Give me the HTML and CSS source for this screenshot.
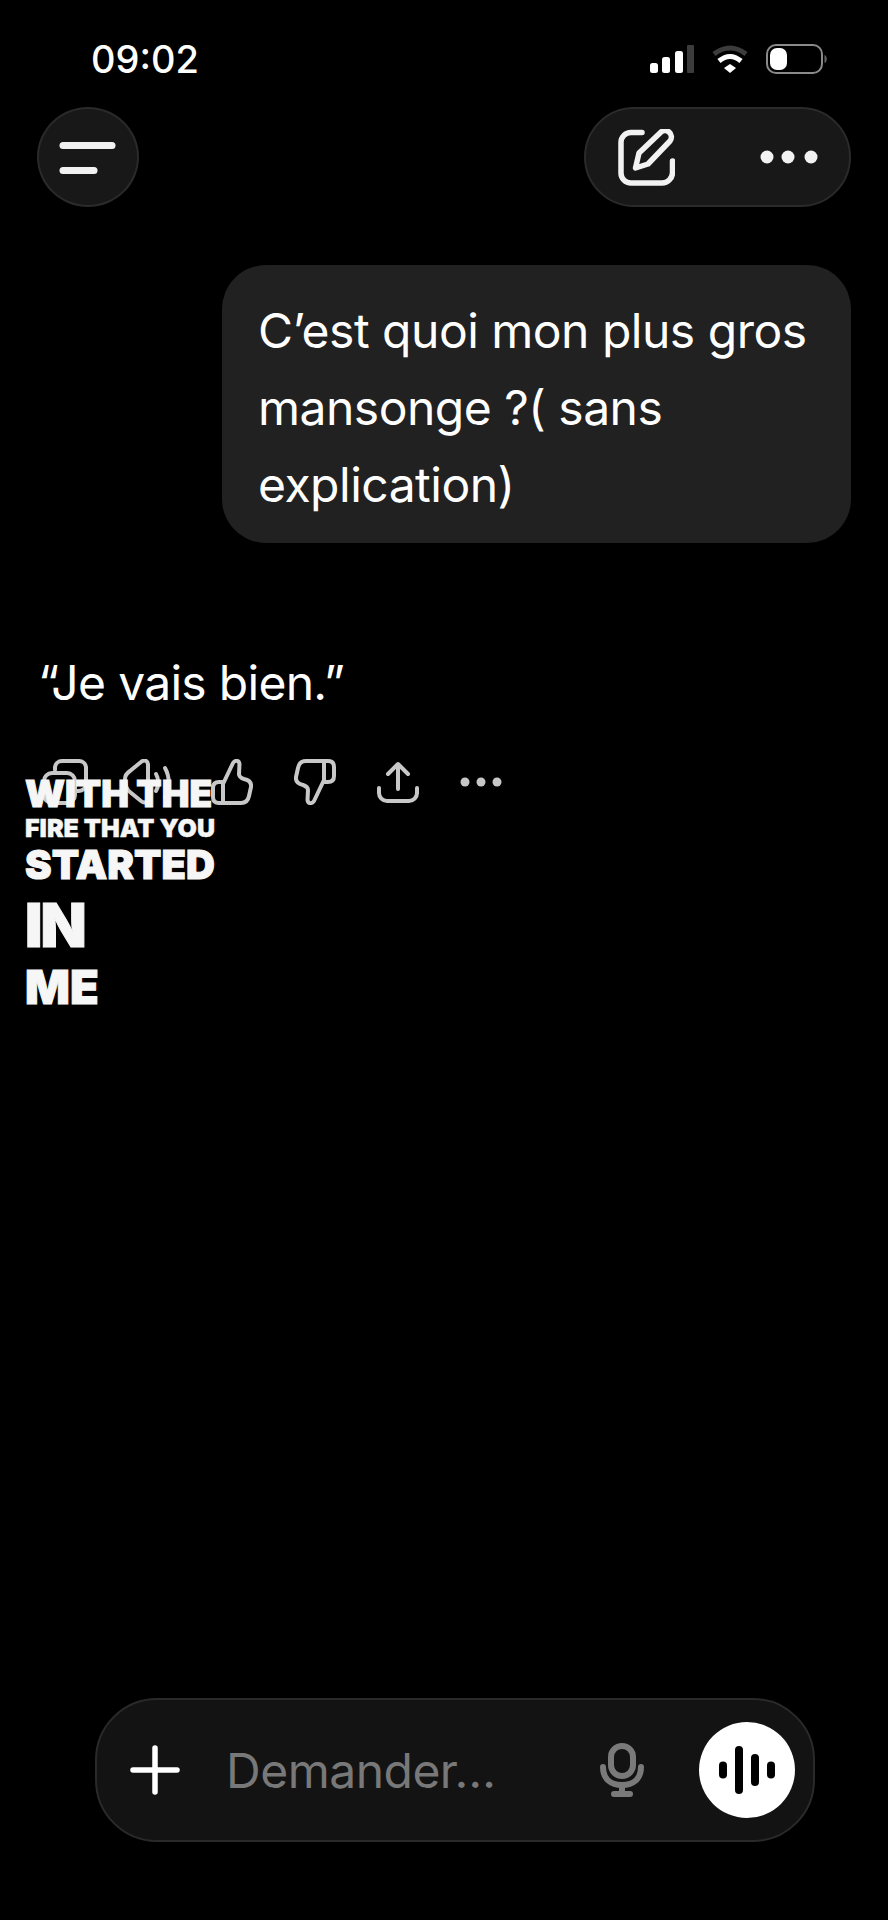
FILE: index.html
```html
<!DOCTYPE html>
<html lang="fr">
<head>
	<meta charset="UTF-8">
	<title>Conversation</title>
	<link rel="stylesheet" href="styles.css">
</head>
<body>
	<div class="screen">
		<div class="status-bar">
			<span class="time">09:02</span>
			<div class="status-icons">
				<svg class="sig" width="44" height="30" viewBox="0 0 44 30">
					<rect x="0" y="19" width="8" height="10" rx="2.500" fill="#fff"/>
					<rect x="12" y="13" width="8" height="16" rx="2.500" fill="#fff"/>
					<rect x="25" y="7" width="8" height="22" rx="2.500" fill="#fff"/>
					<rect x="37" y="1" width="7" height="28" rx="1" fill="#3c3c3c"/>
				</svg>
				<svg class="wifi" width="36" height="30" viewBox="0 0 36 30" fill="none">
					<path d="M2 10 Q18 -2 34 10" stroke="#3c3c3c" stroke-width="5"/>
					<path d="M7 17 Q18 8 29 17" stroke="#fff" stroke-width="5"/>
					<path d="M12 24 L18 20 L24 24 L18 29 Z" fill="#fff"/>
				</svg>
				<svg class="batt" width="62" height="30" viewBox="0 0 62 30" fill="none">
					<rect x="1" y="1" width="55" height="28" rx="9" stroke="#8a8a8a" stroke-width="2"/>
					<rect x="4" y="4" width="17" height="22" rx="7" fill="#fff"/>
					<path d="M58.500 11 C61.500 12 61.500 18 58.500 19 Z" fill="#666"/>
				</svg>
			</div>
		</div>

		<div class="top-bar">
			<button class="round-btn">
				<svg width="60" height="36" viewBox="0 0 60 36" fill="none" stroke="#f2f2f2" stroke-width="7" stroke-linecap="round">
					<path d="M5 6.500 H54"/>
					<path d="M5 31.500 H36"/>
				</svg>
			</button>
			<div class="pill-btn">
				<svg width="57" height="57" viewBox="0 0 57 57" fill="none" stroke="#f2f2f2" stroke-width="5.500" stroke-linecap="round" stroke-linejoin="round">
					<path d="M24 3.500 H13 A10 10 0 0 0 3 13.500 V44 A10 10 0 0 0 13 54 H44 A10.500 10.500 0 0 0 54.500 43.500 V32"/>
					<path d="M17.500 39 L21 24 L42 4 A6 6 0 0 1 52 12 L30 35 Z"/>
				</svg>
				<svg width="58" height="14" viewBox="0 0 58 14" fill="#f2f2f2">
					<circle cx="7" cy="7" r="6.500"/>
					<circle cx="28" cy="7" r="6.500"/>
					<circle cx="51" cy="7" r="6.500"/>
				</svg>
			</div>
		</div>

		<div class="thread">
			<div class="user-msg">C’est quoi mon plus gros mansonge ?( sans explication)</div>
			<p class="reply">“Je vais bien.”</p>
			<div class="reply-actions">
				<svg class="act-copy" width="46" height="46" viewBox="0 0 46 46" fill="none">
					<path d="M13 11 V8 A7 7 0 0 1 20 2 H37 A7 7 0 0 1 44 8 V25 A7 7 0 0 1 37 32 H33"/>
					<rect x="2" y="14" width="31" height="30" rx="8"/>
				</svg>
				<svg class="act-voice" width="50" height="46" viewBox="0 0 50 46" fill="none">
					<path d="M2 20 C2 16 4 14 7 12 L18 3 C22 0 25 2 25 6 V38 C25 43 22 45 18 42 L7 33 C3 30 2 26 2 20 Z"/>
					<path d="M33 15 C36 20 36 27 33 32"/>
					<path d="M42 9 C47 18 47 29 42 38"/>
				</svg>
				<svg class="act-up" width="42" height="46" viewBox="0 0 42 46" fill="none">
					<g transform="rotate(180 21 23)">
						<path d="M30 2 V21 L20 42 C18 45 14 45 13.500 41 L14 31 C14 28 12 27 9 26 C4 25 1.500 22 2 18 L4 9 C5 4 8 2 12 2 H34 C38 2 40 4 40 8 V17 C40 21 38 23 34 23 H30"/>
					</g>
				</svg>
				<svg class="act-down" width="42" height="46" viewBox="0 0 42 46" fill="none">
					<path d="M30 2 V21 L20 42 C18 45 14 45 13.500 41 L14 31 C14 28 12 27 9 26 C4 25 1.500 22 2 18 L4 9 C5 4 8 2 12 2 H34 C38 2 40 4 40 8 V17 C40 21 38 23 34 23 H30"/>
				</svg>
				<svg class="act-share" width="42" height="42" viewBox="0 0 42 42" fill="none">
					<path d="M21 28 V4"/>
					<path d="M11 13 L21 3 L31 13"/>
					<path d="M2 27 V32 A8 8 0 0 0 10 40 H32 A8 8 0 0 0 40 32 V27"/>
				</svg>
				<svg class="act-more" width="42" height="10" viewBox="0 0 42 10" fill="#c8c8c8">
					<circle cx="5" cy="5" r="4.500"/>
					<circle cx="21" cy="5" r="4.500"/>
					<circle cx="37" cy="5" r="4.500"/>
				</svg>
			</div>
		</div>

		<div class="lyrics">
			<span class="ly-a">WITH THE</span>
			<span class="ly-b">FIRE THAT YOU</span>
			<span class="ly-c">STARTED</span>
			<span class="ly-d">IN</span>
			<span class="ly-e">ME</span>
		</div>

		<div class="composer">
			<svg class="plus" width="50" height="50" viewBox="0 0 50 50" stroke="#fff" stroke-width="5.500" stroke-linecap="round">
				<path d="M25 3 V47"/>
				<path d="M3 25 H47"/>
			</svg>
			<span class="placeholder">Demander…</span>
			<svg class="mic" width="44" height="54" viewBox="0 0 44 54" fill="none" stroke="#7a7a7a" stroke-width="6" stroke-linecap="round">
				<rect x="11" y="3" width="22" height="30" rx="11"/>
				<path d="M3 24 C3 36 11 42 22 42 C33 42 41 36 41 24"/>
				<path d="M22 42 V50"/>
				<path d="M14 51 H30"/>
			</svg>
			<div class="send-btn">
				<svg width="56" height="48" viewBox="0 0 56 48" stroke="#000" stroke-width="8" stroke-linecap="round">
					<path d="M4 19.500 V28.500"/>
					<path d="M20 4 V44"/>
					<path d="M36 12 V36"/>
					<path d="M52 19.500 V28.500"/>
				</svg>
			</div>
		</div>
	</div>
</body>
</html>
```

FILE: styles.css
```css
* {
	box-sizing: border-box;
}
html, body {
	margin: 0;
	height: 100%;
	background: #000;
}
.screen {
	position: relative;
	width: 888px;
	height: 1920px;
	overflow: hidden;
	background: #000;
	color: #fff;
	font-family: Inter, "Liberation Sans", sans-serif;
	display: flex;
	flex-direction: column;
}
.status-bar {
	display: flex;
	justify-content: space-between;
	align-items: center;
	height: 30px;
	margin-top: 44px;
	padding: 0 60px 0 91px;
}
.time {
	font-size: 38px;
	font-weight: 500;
}
.status-icons {
	display: flex;
	align-items: center;
	gap: 18px;
}
.top-bar {
	display: flex;
	justify-content: space-between;
	margin-top: 33px;
	padding: 0 37px;
}
.round-btn {
	display: flex;
	align-items: center;
	justify-content: center;
	width: 102px;
	height: 100px;
	padding: 0;
	border-radius: 50%;
	border: 2px solid #2a2a2a;
	background: #181818;
}
.pill-btn {
	display: flex;
	align-items: center;
	justify-content: space-between;
	width: 267px;
	height: 100px;
	padding: 0 31px 0 32px;
	border-radius: 50px;
	border: 2px solid #2a2a2a;
	background: #181818;
}
.thread {
	display: flex;
	flex-direction: column;
	margin-top: 58px;
	padding: 0 37px 0 38px;
}
.user-msg {
	align-self: flex-end;
	width: 629px;
	height: 278px;
	padding: 27px 20px 0 36px;
	border-radius: 44px;
	background: #212121;
	font-size: 48px;
	line-height: 77px;
	letter-spacing: -0.5px;
}
.reply {
	margin: 110px 0 0;
	font-size: 48px;
	line-height: 60px;
	letter-spacing: -0.7px;
}
.reply-actions {
	display: flex;
	align-items: center;
	margin-top: 46px;
	height: 46px;
	padding-left: 4px;
}
.reply-actions svg {
	flex: none;
	stroke: #c8c8c8;
	stroke-width: 4;
	stroke-linecap: round;
	stroke-linejoin: round;
}
.reply-actions .act-more {
	stroke: none;
}
.act-voice {
	margin-left: 35px;
}
.act-up {
	margin-left: 38px;
}
.act-down {
	margin-left: 41px;
}
.act-share {
	margin-left: 41px;
}
.act-more {
	margin-left: 41px;
}
/* video caption that sits on top of the chat */
.lyrics {
	position: absolute;
	left: 25px;
	top: 774px;
	display: flex;
	flex-direction: column;
	font-weight: 900;
	color: #f6f6f6;
}
.lyrics span {
	display: block;
	white-space: nowrap;
	-webkit-text-stroke: 1px #f6f6f6;
}
.lyrics .ly-b {
	-webkit-text-stroke: 0.4px #f6f6f6;
}
.ly-a {
	font-size: 37px;
	line-height: 40px;
}
.ly-b {
	font-size: 25px;
	line-height: 29px;
}
.ly-c {
	font-size: 40px;
	line-height: 44px;
}
.ly-d {
	font-size: 60px;
	line-height: 77px;
	letter-spacing: -2px;
}
.ly-e {
	font-size: 47px;
	line-height: 45px;
}
.composer {
	position: absolute;
	left: 95px;
	top: 1698px;
	display: flex;
	align-items: center;
	width: 720px;
	height: 144px;
	padding: 0 18px 0 33px;
	border-radius: 62px;
	border: 2px solid #2a2a2a;
	background: #131313;
}
.placeholder {
	margin-left: 46px;
	font-size: 48px;
	letter-spacing: -0.5px;
	color: #787878;
}
.mic {
	margin-left: auto;
}
.send-btn {
	display: flex;
	align-items: center;
	justify-content: center;
	width: 96px;
	height: 96px;
	margin-left: 55px;
	border-radius: 50%;
	background: #fff;
}
```
